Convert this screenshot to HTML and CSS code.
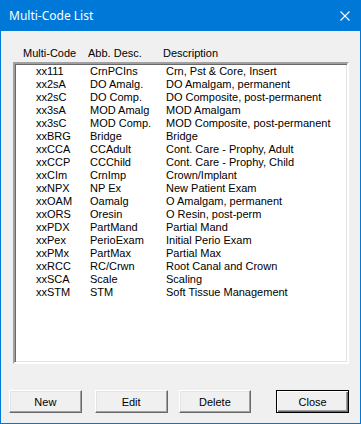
FILE: index.html
```html
<!doctype html>
<html>

<head>
	<meta charset="utf-8" />
	<link rel="stylesheet" href="styles.css">
</head>

<body>

	<div class="window">

		<div class="titlebar">
			<span class="title">Multi-Code List</span>
			<svg class="close-x" width="10" height="10" viewBox="0 0 10 10">
				<path d="M0.5 0.5 L9.5 9.5 M9.5 0.5 L0.5 9.5" stroke="#fff" stroke-width="1.1" fill="none" />
			</svg>
		</div>

		<div class="content">

			<div class="header">
				<span>Multi-Code</span>
				<span>Abb. Desc.</span>
				<span>Description</span>
			</div>

			<div class="listbox">
				<div class="row"><span>xx111</span><span>CrnPCIns</span><span>Crn, Pst &amp; Core, Insert</span></div>
				<div class="row"><span>xx2sA</span><span>DO Amalg.</span><span>DO Amalgam, permanent</span></div>
				<div class="row"><span>xx2sC</span><span>DO Comp.</span><span>DO Composite, post-permanent</span></div>
				<div class="row"><span>xx3sA</span><span>MOD Amalg</span><span>MOD Amalgam</span></div>
				<div class="row"><span>xx3sC</span><span>MOD Comp.</span><span>MOD Composite, post-permanent</span></div>
				<div class="row"><span>xxBRG</span><span>Bridge</span><span>Bridge</span></div>
				<div class="row"><span>xxCCA</span><span>CCAdult</span><span>Cont. Care - Prophy, Adult</span></div>
				<div class="row"><span>xxCCP</span><span>CCChild</span><span>Cont. Care - Prophy, Child</span></div>
				<div class="row"><span>xxCIm</span><span>CrnImp</span><span>Crown/Implant</span></div>
				<div class="row"><span>xxNPX</span><span>NP Ex</span><span>New Patient Exam</span></div>
				<div class="row"><span>xxOAM</span><span>Oamalg</span><span>O Amalgam, permanent</span></div>
				<div class="row"><span>xxORS</span><span>Oresin</span><span>O Resin, post-perm</span></div>
				<div class="row"><span>xxPDX</span><span>PartMand</span><span>Partial Mand</span></div>
				<div class="row"><span>xxPex</span><span>PerioExam</span><span>Initial Perio Exam</span></div>
				<div class="row"><span>xxPMx</span><span>PartMax</span><span>Partial Max</span></div>
				<div class="row"><span>xxRCC</span><span>RC/Crwn</span><span>Root Canal and Crown</span></div>
				<div class="row"><span>xxSCA</span><span>Scale</span><span>Scaling</span></div>
				<div class="row"><span>xxSTM</span><span>STM</span><span>Soft Tissue Management</span></div>
			</div>

			<div class="buttons">
				<button class="btn btn-new">New</button>
				<button class="btn btn-edit">Edit</button>
				<button class="btn btn-delete">Delete</button>
				<button class="btn btn-close">Close</button>
			</div>

		</div>

	</div>

</body>

</html>
```

FILE: styles.css
```css
* {
	box-sizing: border-box;
}

body {
	margin: 0;
	font-family: 'Liberation Sans', Arial, sans-serif;
	font-size: 11px;
	color: #000;
}

.window {
	width: 361px;
	height: 424px;
	display: flex;
	flex-direction: column;
	background: #f0f0f0;
	border: 1px solid #0078d7;
	border-top: none;
}

.titlebar {
	height: 31px;
	flex-shrink: 0;
	display: flex;
	align-items: center;
	justify-content: space-between;
	padding: 0 11px 1px 8px;
	background: #0078d7;
	margin: 0 -1px;
	padding-left: 9px;
}

.title {
	font-family: 'Noto Sans', 'Open Sans', sans-serif;
	font-size: 12px;
	color: #fff;
}

.close-x {
	margin-top: 1px;
}

.content {
	flex: 1;
	display: flex;
	flex-direction: column;
	padding: 16px 11px 0 12px;
}

.header {
	display: grid;
	grid-template-columns: 65px 75px 1fr;
	height: 15px;
	line-height: 13px;
	padding-left: 10px;
}

.listbox {
	height: 302px;
	background: #fff;
	border: 2px solid;
	border-color: #a0a0a0 #fff #fff #a0a0a0;
	box-shadow: inset 1px 1px 0 #696969, inset -1px -1px 0 #e3e3e3;
	padding: 1px 0 0 21px;
}

.row {
	display: grid;
	grid-template-columns: 54px 76px 1fr;
	height: 13px;
	line-height: 13px;
	white-space: nowrap;
}

.buttons {
	display: flex;
	margin-top: 26px;
	margin-left: -4px;
}

.btn {
	width: 74px;
	height: 23px;
	font-family: 'Liberation Sans', Arial, sans-serif;
	font-size: 11px;
	color: #000;
	background: #f0f0f0;
	border: 1px solid;
	border-color: #fff #696969 #696969 #fff;
	box-shadow: inset -1px -1px 0 #a0a0a0, inset 1px 1px 0 #e3e3e3;
	padding: 0;
}

.btn-edit {
	margin-left: 13px;
}

.btn-delete {
	margin-left: 11px;
}

.btn-close {
	margin-left: 25px;
	border: 1px solid #000;
	box-shadow: inset 1px 1px 0 #fff, inset -1px -1px 0 #696969, inset -2px -2px 0 #a0a0a0;
}
```
